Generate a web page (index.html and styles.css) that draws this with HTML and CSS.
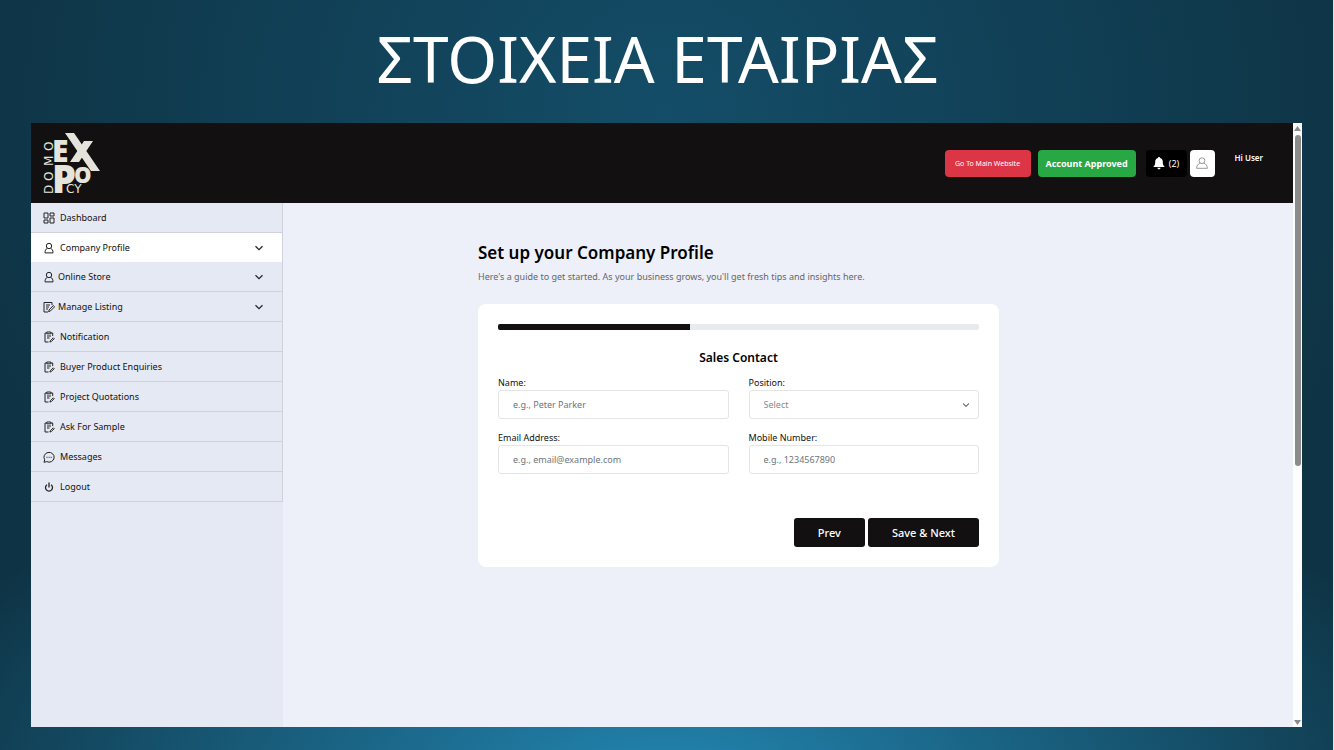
FILE: index.html
```
<!DOCTYPE html>
<html lang="en">
<head>
    <meta charset="UTF-8">
    <meta name="viewport" content="width=device-width, initial-scale=1.0">
    <title>Company Profile</title>
    <link rel="stylesheet" href="styles.css">
</head>
<body>
    <!-- shared icons -->
    <svg class="sprite" aria-hidden="true">
        <symbol id="grid" viewBox="0 0 12 12"><path d="M1 1h4v5H1zM7 1h4v3H7zM1 8h4v3H1zM7 6h4v5H7z"/></symbol>
        <symbol id="user" viewBox="0 0 12 12"><circle cx="6" cy="4" r="2.7"/><path d="M4.300 6.300C2.600 7.200 2 8.700 2 10.900h8c0-2.200-.6-3.700-2.300-4.600"/></symbol>
        <symbol id="edit" viewBox="0 0 12 12"><path d="M9 4V1.500H1v9.500h4M3 4h4M3 6h3M3 8h2M10.300 4.500l1.300 1.300-4.300 4.300-1.700.5.500-1.700z"/></symbol>
        <symbol id="clip" viewBox="0 0 12 12"><path d="M3.500 2H2v9h3.500M8 2h1.700v3M3.800 1h4v1.800h-4zM4 5h4M4 7h2.500M10.300 6.800l.9.9-3 3-1.300.3.400-1.200z"/></symbol>
        <symbol id="chat" viewBox="0 0 12 12"><path d="M1 11.300l.7-2.500a5.100 4.900 0 1 1 2 1.800zM3.500 6.300h1M5.600 6.300h1M7.700 6.300h1"/></symbol>
        <symbol id="power" viewBox="0 0 12 12"><path d="M4 3.700a3.500 3.500 0 1 0 4 0M6 1.500v5" stroke-width="1.300"/></symbol>
        <symbol id="down" viewBox="0 0 12 12"><path d="M2.500 4.300L6 7.700l3.500-3.400" stroke-width="1.200"/></symbol>
    </svg>

    <div class="slide">
        <h1 lang="el">ΣΤΟΙΧΕΙΑ ΕΤΑΙΡΙΑΣ</h1>

        <div class="window">
            <div class="app">
                <header class="topbar">
                    <a href="#" class="logo" aria-label="Domo Expo CY">
                        <svg width="60" height="64" viewBox="0 0 60 64">
                            <g class="logo-bold">
                                <text x="10" y="31" font-size="30">E</text>
                                <text x="10" y="62" font-size="38">P</text>
                                <text x="32" y="52" font-size="22">O</text>
                            </g>
                            <path d="M23 2h9l26 38h-9z"/>
                            <path d="M42 10h9L37 31h-9z"/>
                            <g class="logo-thin">
                                <text x="24" y="62" font-size="12">CY</text>
                                <text font-size="12" transform="translate(11 63) rotate(-90)" x="0 13 28 43">DOMO</text>
                            </g>
                        </svg>
                    </a>
                    <div class="actions">
                        <a href="#" class="btn-main">Go To Main Website</a>
                        <button type="button" class="btn-approved">Account Approved</button>
                        <button type="button" class="btn-bell">
                            <svg width="12" height="13" viewBox="0 0 12 13"><path d="M6 0c.7 0 1 .4 1 1 2 .5 2.800 2 2.800 4 0 2.500.6 3.700 2 5H.2c1.400-1.300 2-2.500 2-5 0-2 .8-3.500 2.800-4 0-.6.3-1 1-1zM4.500 10.700h3c0 .9-.7 1.600-1.500 1.600s-1.500-.7-1.500-1.600z"/></svg>
                            (2)
                        </button>
                        <button type="button" class="btn-user" aria-label="Account">
                            <svg class="icon" viewBox="0 0 12 12"><circle cx="6" cy="3.700" r="2.900"/><path d="M4.300 6C2.200 6.800.8 8.500.6 11.300h10.800C11.200 8.500 9.800 6.800 7.700 6"/></svg>
                        </button>
                        <span class="hello">Hi User</span>
                    </div>
                </header>

                <div class="body">
                    <nav class="sidebar">
                        <a href="#"><svg class="icon"><use href="#grid"/></svg>Dashboard</a>
                        <a href="#" class="active"><svg class="icon"><use href="#user"/></svg>Company Profile<svg class="icon arrow"><use href="#down"/></svg></a>
                        <a href="#" class="tight"><svg class="icon"><use href="#user"/></svg>Online Store<svg class="icon arrow"><use href="#down"/></svg></a>
                        <a href="#" class="tight"><svg class="icon"><use href="#edit"/></svg>Manage Listing<svg class="icon arrow"><use href="#down"/></svg></a>
                        <a href="#"><svg class="icon"><use href="#clip"/></svg>Notification</a>
                        <a href="#"><svg class="icon"><use href="#clip"/></svg>Buyer Product Enquiries</a>
                        <a href="#"><svg class="icon"><use href="#clip"/></svg>Project Quotations</a>
                        <a href="#"><svg class="icon"><use href="#clip"/></svg>Ask For Sample</a>
                        <a href="#"><svg class="icon"><use href="#chat"/></svg>Messages</a>
                        <a href="#"><svg class="icon"><use href="#power"/></svg>Logout</a>
                    </nav>

                    <main>
                        <div class="content">
                            <h2>Set up your Company Profile</h2>
                            <p class="intro">Here's a guide to get started. As your business grows, you'll get fresh tips and insights here.</p>

                            <form class="card">
                                <div class="progress" role="progressbar" aria-label="Profile setup" aria-valuenow="40">
                                    <div class="progress-bar" style="width: 40%"></div>
                                </div>
                                <h3>Sales Contact</h3>
                                <div class="fields">
                                    <div class="field">
                                        <label for="name">Name:</label>
                                        <input type="text" id="name" placeholder="e.g., Peter Parker">
                                    </div>
                                    <div class="field">
                                        <label for="position">Position:</label>
                                        <div class="select">
                                            <select id="position">
                                                <option>Select</option>
                                            </select>
                                            <svg class="icon"><use href="#down"/></svg>
                                        </div>
                                    </div>
                                    <div class="field">
                                        <label for="email">Email Address:</label>
                                        <input type="email" id="email" placeholder="e.g., email@example.com">
                                    </div>
                                    <div class="field">
                                        <label for="mobile">Mobile Number:</label>
                                        <input type="tel" id="mobile" placeholder="e.g., 1234567890">
                                    </div>
                                </div>
                                <div class="buttons">
                                    <button type="button">Prev</button>
                                    <button type="submit">Save &amp; Next</button>
                                </div>
                            </form>
                        </div>
                    </main>
                </div>
            </div>

            <div class="scrollbar" aria-hidden="true">
                <svg width="7" height="5" viewBox="0 0 7 5"><path d="M3.500 0L7 5H0z"/></svg>
                <div class="track"><div class="thumb"></div></div>
                <svg width="7" height="5" viewBox="0 0 7 5"><path d="M0 0h7L3.500 5z"/></svg>
            </div>
        </div>
    </div>
</body>
</html>
```
FILE: styles.css
```
* {
    box-sizing: border-box;
}
body {
    margin: 0;
    font-family: "Noto Sans", sans-serif;
    font-size: 9px;
    color: #111;
}
h1, h2, h3, p {
    margin: 0;
}
a {
    color: inherit;
    text-decoration: none;
}
button, input, select {
    font-family: inherit;
    font-size: 9px;
}
.sprite {
    position: absolute;
    width: 0;
    height: 0;
}
.icon {
    width: 12px;
    height: 12px;
    flex: none;
    fill: none;
    stroke: #222;
    stroke-width: 1;
}

/* slide */
.slide {
    min-height: 100vh;
    display: flex;
    flex-direction: column;
    padding: 0 31px 23px;
    border-right: 1px solid #dfe6ea;
    background:
        radial-gradient(ellipse 60% 50% at 50% 105%, #2387b3, rgba(35, 135, 179, 0)),
        radial-gradient(ellipse 55% 90% at 50% 15%, #144d68, #0e3344);
}
h1 {
    padding: 0 18px 5px 0;
    font-size: 64px;
    font-weight: 400;
    line-height: 118px;
    text-align: center;
    color: #fff;
}
.window {
    flex: 1;
    display: flex;
}
.app {
    flex: 1;
    display: flex;
    flex-direction: column;
    background-color: #edf0f9;
}

/* top bar */
.topbar {
    height: 80px;
    display: flex;
    justify-content: space-between;
    align-items: center;
    padding: 0 30px 0 11px;
    background-color: #121011;
}
.logo svg {
    display: block;
    overflow: visible;
    fill: #e4e4dc;
}
.logo-bold {
    font-family: "Open Sans", sans-serif;
    font-weight: 800;
}
.logo-thin {
    font-family: "DejaVu Sans", sans-serif;
}
.actions {
    display: flex;
    align-items: center;
    color: #fff;
}
.actions button, .btn-main {
    height: 27px;
    display: flex;
    align-items: center;
    justify-content: center;
    padding: 0;
    border: none;
    border-radius: 4px;
    color: #fff;
}
.actions .btn-main {
    width: 86px;
    margin-right: 7px;
    background-color: #dc3545;
    font-size: 7px;
}
.actions .btn-approved {
    width: 98px;
    margin-right: 10px;
    background-color: #28a745;
    font-weight: 700;
}
.actions .btn-bell {
    width: 41px;
    gap: 4px;
    margin-right: 3px;
    background-color: #000;
}
.btn-bell svg {
    fill: #fff;
}
.actions .btn-user {
    width: 25px;
    margin-right: 20px;
    background-color: #fff;
}
.btn-user .icon {
    stroke: #999;
}
.hello {
    padding-bottom: 11px;
    font-size: 8px;
    font-weight: 600;
}

/* sidebar */
.body {
    flex: 1;
    display: flex;
}
.sidebar {
    width: 252px;
    background-color: #e5e9f4;
}
.sidebar a {
    height: 30px;
    display: flex;
    align-items: center;
    gap: 5px;
    padding: 0 17px 0 12px;
    border-right: 1px solid #cfd2da;
    border-bottom: 1px solid #cfd2da;
}
.sidebar a.active {
    height: 29px;
    border-bottom: none;
    background-color: #fff;
}
.sidebar a.tight {
    gap: 3px;
}
.sidebar .arrow {
    margin-left: auto;
}

/* form */
main {
    flex: 1;
    display: grid;
    grid-template-columns: 195fr 521fr 294fr;
    align-content: start;
    padding-top: 38px;
}
.content {
    grid-column: 2;
}
h2 {
    font-size: 17px;
    font-weight: 600;
    line-height: 24px;
    color: #000;
}
.intro {
    margin-top: 4px;
    line-height: 16px;
    color: #666;
}
.card {
    margin-top: 19px;
    padding: 20px;
    border-radius: 8px;
    background-color: #fff;
}
.progress {
    height: 6px;
    border-radius: 2px;
    overflow: hidden;
    background-color: #e8ebed;
}
.progress-bar {
    height: 100%;
    background-color: #121011;
}
h3 {
    margin-top: 19px;
    font-size: 12px;
    font-weight: 600;
    line-height: 18px;
    text-align: center;
    color: #000;
}
.fields {
    display: grid;
    grid-template-columns: 1fr 1fr;
    gap: 11px 20px;
    margin-top: 8px;
}
.field label {
    display: block;
    line-height: 15px;
}
.field input, .field select {
    display: block;
    width: 100%;
    height: 29px;
    padding: 0 14px;
    border: 1px solid #e4e4e4;
    border-radius: 3px;
    background-color: #fff;
    color: #888;
}
.field input::placeholder {
    color: #6c757d;
}
.select {
    display: grid;
    align-items: center;
}
.select select, .select .icon {
    grid-area: 1 / 1;
}
.select select {
    appearance: none;
}
.select .icon {
    width: 10px;
    height: 10px;
    justify-self: end;
    margin-right: 8px;
    pointer-events: none;
}
.buttons {
    display: flex;
    justify-content: flex-end;
    gap: 3px;
    margin-top: 44px;
}
.buttons button {
    height: 29px;
    padding: 0 24px;
    border: none;
    border-radius: 3px;
    background-color: #121011;
    color: #fff;
    font-size: 11px;
    font-weight: 500;
}

/* scrollbar */
.scrollbar {
    width: 9px;
    display: flex;
    flex-direction: column;
    align-items: center;
    gap: 4px;
    padding: 3px 0 2px;
    background-color: #fdfdfd;
}
.scrollbar svg {
    fill: #8b8b8b;
}
.track {
    flex: 1;
}
.thumb {
    width: 6px;
    height: 57%;
    border-radius: 3px;
    background-color: #8b8b8b;
}
```
